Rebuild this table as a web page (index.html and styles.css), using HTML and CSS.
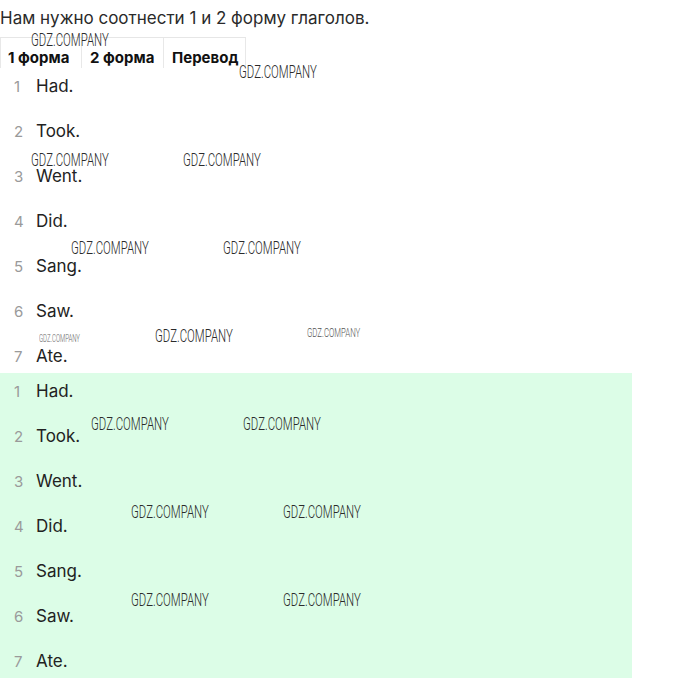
FILE: index.html
```html
<!DOCTYPE html>
<html>
<head>
<meta charset="utf-8">
<link rel="stylesheet" href="styles.css">
</head>
<body>
<div class="page">
  <p class="title">Нам нужно соотнести 1 и 2 форму глаголов.</p>
  <div class="thead">
    <div class="th">1 форма</div>
    <div class="th">2 форма</div>
    <div class="th">Перевод</div>
  </div>
  <ol class="list">
    <li><span class="num">1</span><span class="word">Had.</span></li>
    <li><span class="num">2</span><span class="word">Took.</span></li>
    <li><span class="num">3</span><span class="word">Went.</span></li>
    <li><span class="num">4</span><span class="word">Did.</span></li>
    <li><span class="num">5</span><span class="word">Sang.</span></li>
    <li><span class="num">6</span><span class="word">Saw.</span></li>
    <li><span class="num">7</span><span class="word">Ate.</span></li>
  </ol>
  <div class="green">
    <ol class="list">
      <li><span class="num">1</span><span class="word">Had.</span></li>
      <li><span class="num">2</span><span class="word">Took.</span></li>
      <li><span class="num">3</span><span class="word">Went.</span></li>
      <li><span class="num">4</span><span class="word">Did.</span></li>
      <li><span class="num">5</span><span class="word">Sang.</span></li>
      <li><span class="num">6</span><span class="word">Saw.</span></li>
      <li><span class="num">7</span><span class="word">Ate.</span></li>
    </ol>
  </div>
  <div class="wm" style="left:31px;top:30px">GDZ.COMPANY</div>
  <div class="wm" style="left:239px;top:62px">GDZ.COMPANY</div>
  <div class="wm" style="left:31px;top:150px">GDZ.COMPANY</div>
  <div class="wm" style="left:183px;top:150px">GDZ.COMPANY</div>
  <div class="wm" style="left:71px;top:238px">GDZ.COMPANY</div>
  <div class="wm" style="left:223px;top:238px">GDZ.COMPANY</div>
  <div class="wm wm-xs" style="left:39px;top:334px">GDZ.COMPANY</div>
  <div class="wm" style="left:155px;top:326px">GDZ.COMPANY</div>
  <div class="wm wm-s" style="left:307px;top:326px">GDZ.COMPANY</div>
  <div class="wm" style="left:91px;top:414px">GDZ.COMPANY</div>
  <div class="wm" style="left:243px;top:414px">GDZ.COMPANY</div>
  <div class="wm" style="left:131px;top:502px">GDZ.COMPANY</div>
  <div class="wm" style="left:283px;top:502px">GDZ.COMPANY</div>
  <div class="wm" style="left:131px;top:590px">GDZ.COMPANY</div>
  <div class="wm" style="left:283px;top:590px">GDZ.COMPANY</div>
</div>
</body>
</html>
```
FILE: styles.css
```css
html, body {
  margin: 0;
  padding: 0;
  background: #fff;
}
.page {
  position: relative;
  width: 680px;
  height: 678px;
  overflow: hidden;
  font-family: Inter, "Noto Sans", sans-serif;
  color: #222;
}
.title {
  margin: 0;
  padding-top: 7px;
  font-size: 17px;
  line-height: 22px;
  color: #2a2a2a;
}
.thead {
  display: flex;
  width: 246px;
  height: 31px;
  margin-top: 8px;
  border-top: 1px solid #e6e6e6;
  box-sizing: border-box;
}
.th {
  width: 82px;
  box-sizing: border-box;
  padding: 10px 0 0 8px;
  font-size: 15px;
  line-height: 19px;
  font-weight: 700;
  color: #111;
  border-right: 1px solid #e8e8e8;
}
.th:first-child { border-left: 1px solid #e8e8e8; padding-left: 7px; }
.list {
  list-style: none;
  margin: 0;
  padding: 6px 0 5px 0;
  display: flex;
  flex-direction: column;
  gap: 21px;
}
.list li {
  display: flex;
  align-items: baseline;
  height: 24px;
  line-height: 24px;
}
.num {
  width: 36px;
  box-sizing: border-box;
  padding-left: 14px;
  font-size: 15px;
  color: #9a9a9a;
}
.word {
  font-size: 17px;
  color: #222;
}
.green {
  width: 632px;
  background: #dcfde7;
}
.wm {
  position: absolute;
  font-family: Roboto, "Liberation Sans", sans-serif;
  font-weight: 300;
  font-size: 19px;
  line-height: 19px;
  color: #2a2a2a;
  transform: scaleX(0.6);
  transform-origin: left top;
  white-space: nowrap;
}
.wm-s {
  font-size: 13px;
  line-height: 13px;
  color: #555;
}
.wm-xs {
  font-size: 10px;
  line-height: 10px;
  color: #666;
}
```
